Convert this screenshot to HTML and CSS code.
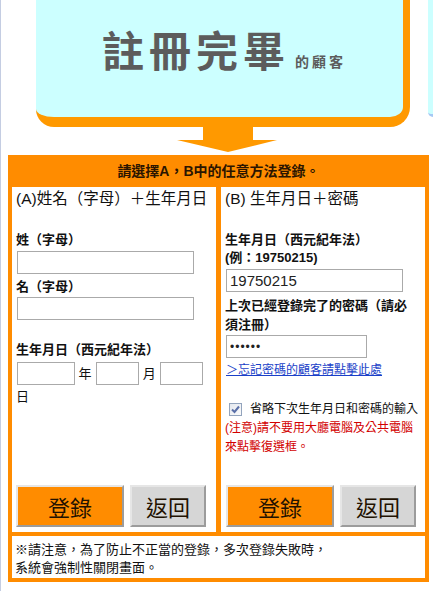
FILE: index.html
```html
<!DOCTYPE html>
<html lang="zh-Hant">
<head>
  <meta charset="UTF-8" />
  <meta name="viewport" content="width=device-width, initial-scale=1.0"/>
  <title>註冊完畢的顧客 - 登錄</title>
  <link rel="stylesheet" href="styles.css">
</head>
<body>
  <div class="hero">
    <div class="hero-box">
      <h1>註冊完畢<small>的顧客</small></h1>
    </div>
    <div class="hero-next"></div>
    <svg class="arrow" width="100" height="25" viewBox="0 0 100 25">
      <polygon points="26,0 76,0 76,13 100,13 51,25 0,13 26,13" fill="#ff9900"/>
    </svg>
  </div>

  <div class="login">
    <div class="login-head">請選擇A，B中的任意方法登錄。</div>

    <div class="login-cols">
      <!-- A: 姓名 + 生日 -->
      <form class="col col-a">
        <h2>(A)姓名（字母）＋生年月日</h2>
        <div class="lbl lbl-first">姓（字母）</div>
        <input class="txt txt-name" type="text">
        <div class="lbl lbl-second">名（字母）</div>
        <input class="txt txt-name txt-second" type="text">
        <div class="lbl lbl-birth">生年月日（西元紀年法）</div>
        <div class="date">
          <input class="txt d-year" type="text"> 年 <input class="txt d-md" type="text"> 月 <input class="txt d-md" type="text"> 日
        </div>
        <div class="btns">
          <button type="button" class="btn-go">登錄</button>
          <button type="button" class="btn-back">返回</button>
        </div>
      </form>

      <!-- B: 生日 + 密碼 -->
      <form class="col col-b">
        <h2>(B) 生年月日＋密碼</h2>
        <div class="lbl lbl-first">生年月日（西元紀年法）<br>(例：19750215)</div>
        <input class="txt txt-birth" type="text" value="19750215">
        <div class="lbl lbl-pass">上次已經登錄完了的密碼（請必須注冊）</div>
        <input class="txt txt-pass" type="password" value="abcdef">
        <a class="forgot" href="#">＞忘記密碼的顧客請點擊此處</a>
        <label class="remember">
          <span class="chk">
            <svg width="9" height="9" viewBox="0 0 9 9"><path d="M1 4.5 L3.5 7 L8 1.5" fill="none" stroke="#5a6fa8" stroke-width="2"/></svg>
          </span>省略下次生年月日和密碼的輸入
        </label>
        <p class="warn">(注意)請不要用大廳電腦及公共電腦來點擊復選框。</p>
        <div class="btns">
          <button type="button" class="btn-go">登錄</button>
          <button type="button" class="btn-back">返回</button>
        </div>
      </form>
    </div>

    <div class="login-note">
      ※請注意，為了防止不正當的登錄，多次登錄失敗時，<br>
      系統會強制性關閉畫面。
    </div>
  </div>
</body>
</html>
```

FILE: styles.css
```css
body {
  font-family: 'Liberation Sans', 'Noto Sans CJK TC', sans-serif;
  background-color: white;
  color: #111;
  margin: 0;
  border-left: 1px solid #c4cde2;
  height: 591px;
  position: relative;
  overflow: hidden;
}

/* Top banner */
.hero-box {
  margin: -20px 0 0 35px;
  width: 367px;
  height: 137px;
  background-color: #ccffff;
  border-right: 7px solid #ff9900;
  border-bottom: 10px solid #ff9900;
  border-radius: 0 0 20px 18px;
  display: flex;
  align-items: center;
  justify-content: center;
}
.hero-box h1 {
  margin: 0 0 0 9px;
  font-family: 'Noto Sans CJK TC', sans-serif;
  font-size: 42px;
  line-height: 1;
  letter-spacing: 5px;
  color: #5c5c5c;
  font-weight: bold;
}
.hero-box h1 small {
  font-size: 14px;
  letter-spacing: 3px;
  margin-left: 5px;
}
.hero-next {
  position: absolute;
  left: 427px;
  top: -20px;
  width: 5px;
  height: 134px;
  background-color: #ccffff;
  border-bottom: 3px solid #a6c9f4;
  border-radius: 0 0 0 18px;
}
.arrow {
  display: block;
  margin-left: 176px;
}

/* Login panel */
.login {
  margin: 3px 0 0 7px;
  width: 421px;
  box-sizing: border-box;
  background-color: #ff8c00;
  padding: 0 4px 4px;
}
.login-head {
  height: 32px;
  line-height: 32px;
  text-align: center;
  font-size: 14px;
  font-weight: bold;
  color: #2b1500;
}
.login-cols {
  display: grid;
  grid-template-columns: minmax(0, 1fr) minmax(0, 1fr);
  column-gap: 5px;
  height: 345px;
}
.col {
  background-color: white;
  padding: 3px 6px 5px 4px;
  display: flex;
  flex-direction: column;
  align-items: flex-start;
  min-width: 0;
}
.col-a {
  padding-right: 2px;
}
.col h2 {
  margin: 0;
  font-size: 15.5px;
  font-weight: normal;
  line-height: 18px;
  white-space: nowrap;
}
.lbl {
  font-size: 13px;
  font-weight: bold;
  line-height: 18px;
}
.lbl-first {
  margin-top: 23px;
}
.lbl-second {
  margin-top: 4px;
}
.lbl-birth {
  margin-top: 21px;
}
.lbl-pass {
  margin-top: 4px;
  line-height: 19px;
}
.txt {
  box-sizing: border-box;
  height: 23px;
  margin: 2px 0 0 1px;
  border: 1px solid #aaa;
  padding: 1px 3px;
  font-family: 'Liberation Sans', sans-serif;
  font-size: 15px;
  color: #222;
  background: white;
}
.txt-name {
  width: 177px;
}
.txt-second {
  margin-top: 1px;
}
.txt-birth {
  width: 177px;
}
.txt-pass {
  width: 141px;
  margin-top: 1px;
  font-size: 12px;
  letter-spacing: 1px;
}
.date {
  margin-top: 3px;
  font-size: 13px;
  line-height: 23px;
}
.date .txt {
  margin: 0 0 0 1px;
  vertical-align: top;
}
.d-year {
  width: 58px;
}
.d-md {
  width: 43px;
}
.forgot {
  margin: 4px 0 0 1px;
  font-size: 12px;
  line-height: 16px;
  color: #1a3fc8;
}
.remember {
  margin-top: 22px;
  font-size: 12px;
  line-height: 19px;
  display: flex;
  align-items: center;
}
.chk {
  box-sizing: border-box;
  width: 13px;
  height: 13px;
  margin: 0 8px 0 4px;
  border: 1px solid #93a4bd;
  background: linear-gradient(135deg, #e4e8ee, #fbfbfb);
  display: flex;
  align-items: center;
  justify-content: center;
}
.warn {
  margin: 0;
  font-size: 12px;
  line-height: 19px;
  color: #d20000;
}

/* Buttons */
.btns {
  margin-top: auto;
  display: flex;
  gap: 6px;
}
.col-b .btns {
  margin-left: 1px;
}
.btns button {
  height: 42px;
  font-family: 'Noto Sans CJK TC', sans-serif;
  font-size: 22px;
  color: #221100;
  padding: 0;
  cursor: pointer;
  border: 2px solid;
  border-color: #e6e6e6 #9c9c9c #9c9c9c #e6e6e6;
}
.btn-go {
  width: 108px;
  background-color: #ff8c00;
}
.btn-back {
  width: 76px;
  background-color: #d6d6d6;
}

/* Footer note */
.login-note {
  margin-top: 4px;
  height: 42px;
  box-sizing: border-box;
  background-color: white;
  padding: 5px 4px 2px 3px;
  font-size: 13px;
  line-height: 18px;
}
```
